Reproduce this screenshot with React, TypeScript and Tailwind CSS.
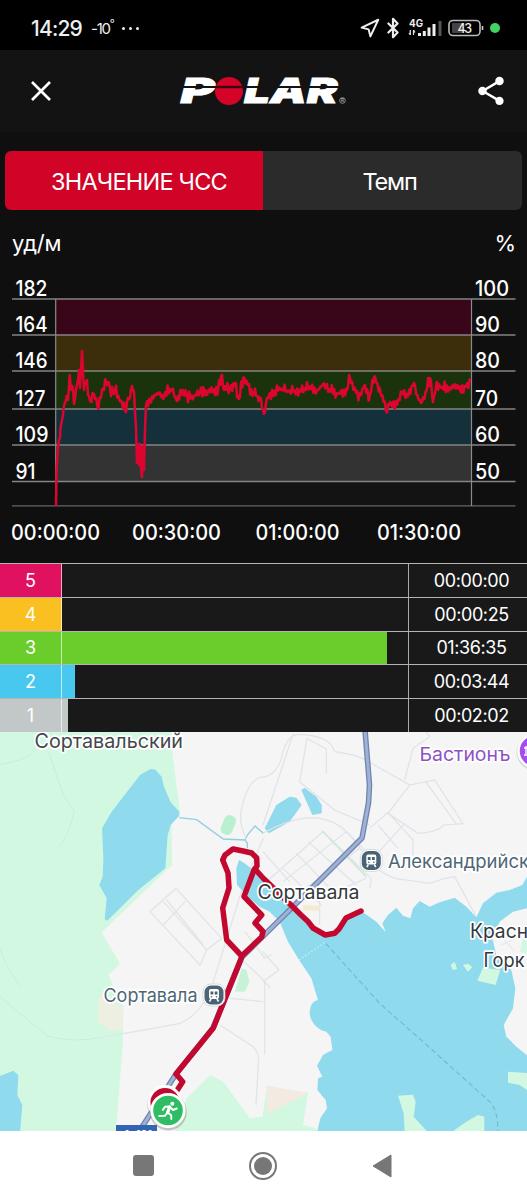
import { Bluetooth, Navigation } from "lucide-react";
import { MdShare } from "react-icons/md";

const gridLines = [
  { y: 299, bpm: 182, bpmWidth: 32, percent: 100, percentWidth: 34 },
  { y: 335, bpm: 164, bpmWidth: 32, percent: 90, percentWidth: 25 },
  { y: 371, bpm: 146, bpmWidth: 32, percent: 80, percentWidth: 25 },
  { y: 409, bpm: 127, bpmWidth: 30, percent: 70, percentWidth: 23 },
  { y: 445, bpm: 109, bpmWidth: 33, percent: 60, percentWidth: 25 },
  { y: 481.5, bpm: 91, bpmWidth: 20, percent: 50, percentWidth: 25 },
];

const bands = [
  { y: 299, height: 36, color: "#380519" },
  { y: 335, height: 36, color: "#3d2e0b" },
  { y: 371, height: 38, color: "#1b330d" },
  { y: 409, height: 36, color: "#14313b" },
  { y: 445, height: 36.5, color: "#333333" },
  { y: 481.5, height: 24, color: "#131313" },
];

const timeTicks = [
  { x: 11, width: 89, label: "00:00:00" },
  { x: 132, width: 89, label: "00:30:00" },
  { x: 255.5, width: 84, label: "01:00:00" },
  { x: 377, width: 84, label: "01:30:00" },
];

const heartRate: [number, number][] = [
  [56, 506], [56.6, 470], [57.7, 450], [59, 440], [60.5, 428], [62, 420],
  [63.5, 409], [65, 403], [66.5, 396], [68, 400], [69.7, 375], [71, 390],
  [73, 388], [74, 404], [76, 390], [78, 380], [79, 370], [80, 388],
  [82, 351], [83, 372], [84, 390], [87, 380], [88, 395], [91.5, 402],
  [94, 394], [98.5, 409], [100, 398], [103, 390], [106, 382], [108, 382],
  [110, 388], [113, 393], [115, 390], [119, 398], [122, 403], [125, 411],
  [127, 402], [130, 397], [132, 386], [134, 392], [135, 412], [136, 428],
  [137, 463], [138, 444], [139, 465], [140, 444], [141, 468], [142, 477],
  [143, 446], [144, 470], [145, 430],
  [146, 405], [150, 399], [155, 395], [160, 393], [163, 399], [168, 388],
  [172, 391], [177, 401], [181, 391], [187, 396], [194, 396], [200, 393],
  [208, 392], [218, 391], [221, 376], [224, 390], [230, 388], [235, 383],
  [239, 399], [243, 378], [248, 385], [254, 394], [261, 399], [264, 414],
  [266, 403], [270, 393], [280, 389], [290, 392], [300, 390], [310, 387],
  [317, 391], [323, 384], [326, 388], [337, 394], [347, 390], [350, 378],
  [355, 389], [359, 397], [364, 386], [369, 400], [374, 377], [379, 387],
  [384, 401], [386, 411], [390, 402], [395, 408], [402, 392], [407, 397],
  [414, 383], [418, 398], [421, 403], [426, 392], [430, 378], [433, 402],
  [437, 382], [440, 387], [450, 389], [455, 386], [460, 389], [465, 387],
  [471, 380],
];

// adds the beat-to-beat jitter between the main samples
const buildTrace = () => {
  const points: string[] = [];
  let n = 0;
  for (let i = 0; i < heartRate.length - 1; i++) {
    const [x1, y1] = heartRate[i];
    const [x2, y2] = heartRate[i + 1];
    points.push(`${x1},${y1}`);
    for (let x = x1 + 1; x < x2 - 0.4; x += 1.2) {
      n++;
      const noise = Math.abs(Math.sin(n * 12.9898) * 43758.5453) % 1;
      const y = y1 + ((y2 - y1) * (x - x1)) / (x2 - x1);
      points.push(`${x},${(y + (n % 2 ? 1 : -1) * (0.5 + noise * noise * 6)).toFixed(1)}`);
    }
  }
  points.push("471,380");
  return points.join(" ");
};

const zones = [
  { id: 5, color: "bg-[#e0115f]", bar: "w-0", time: "00:00:00" },
  { id: 4, color: "bg-[#fabf20]", bar: "w-0", time: "00:00:25" },
  { id: 3, color: "bg-[#6acd2c]", bar: "w-[325px]", time: "01:36:35" },
  { id: 2, color: "bg-[#48c8ef]", bar: "w-[13px]", time: "00:03:44" },
  { id: 1, color: "bg-[#c2c8c8]", bar: "w-[6px]", time: "00:02:02" },
];

const StatusBar = () => (
  <div className="h-[50px] bg-black flex items-center pt-1.5 pl-[31px] pr-[27px] text-[#eee]">
    <span className="text-[21px] font-medium tracking-[-0.8px] leading-none">14:29</span>
    <span className="ml-[9px] text-[15px] leading-none tracking-[-1.3px]">
      -10<sup className="text-[11px] top-[-7px]">°</sup>
    </span>
    <span className="ml-[9px] flex gap-1">
      <i className="size-[3px] rounded-full bg-[#eee]" />
      <i className="size-[3px] rounded-full bg-[#eee]" />
      <i className="size-[3px] rounded-full bg-[#eee]" />
    </span>
    <div className="ml-auto flex items-center">
      <Navigation size={21} strokeWidth={2.3} />
      <Bluetooth className="ml-0.5" size={22} strokeWidth={2.4} />
      <svg className="ml-1" width="36" height="20" viewBox="0 0 36 20">
        <text x="1" y="9" fontSize="10" fontWeight="700" textLength="14" lengthAdjust="spacingAndGlyphs" fill="#eee">
          4G
        </text>
        <path d="M2.3 12v5M1 15l1.3 2M5.5 17v-5M5.5 12l1.5 2.5" stroke="#ddd" strokeWidth="1.3" fill="none" />
        <path d="M11.5 18v-3M16.3 18v-5M21 18V9.500M26 18V6" stroke="#eee" strokeWidth="3" />
        <path d="M32 18V3" stroke="#555" strokeWidth="3" />
      </svg>
      <svg className="ml-1" width="36" height="18" viewBox="0 0 36 18">
        <rect x="1" y="1.500" width="31" height="15" rx="4" fill="none" stroke="#bbb" strokeWidth="1.600" />
        <rect x="4" y="4" width="11" height="10" rx="1" fill="#444" />
        <path d="M34.500 7v4" stroke="#ccc" strokeWidth="1.600" />
        <text x="9.500" y="13.600" fontSize="12.500" fontWeight="500" textLength="14.500" fill="#eee">
          43
        </text>
      </svg>
      <i className="ml-1.5 size-2.5 rounded-full bg-[#41d463]" />
    </div>
  </div>
);

const PolarLogo = () => (
  <svg width="170" height="34" viewBox="0 0 170 34" className="block overflow-visible">
    <g fill="#fff" stroke="#fff" strokeWidth=".8" fontWeight="900" fontStyle="italic" fontSize="34">
      <text x="2.500" y="29.300" textLength="34" lengthAdjust="spacingAndGlyphs">P</text>
      <text x="66" y="29.300" textLength="93.500" lengthAdjust="spacingAndGlyphs">LAR</text>
    </g>
    <path d="M0 13h170" stroke="#131313" strokeWidth="2" />
    <circle cx="51" cy="17" r="14" fill="#d50328" />
    <path d="M37 13h28" stroke="#3a0a12" strokeWidth="2.400" />
    <circle cx="164.500" cy="26.500" r="2.800" fill="none" stroke="#aaa" strokeWidth=".8" />
    <text x="163" y="28.200" fontSize="4.500" fill="#ccc">R</text>
  </svg>
);

const Header = () => (
  <div className="h-[82px] bg-[#131313] flex items-center justify-between pl-[31px] pr-[19px]">
    <svg width="20" height="20" viewBox="0 0 20 20">
      <path d="M1 1l18 18M19 1L1 19" stroke="#fff" strokeWidth="2.700" />
    </svg>
    <PolarLogo />
    <MdShare className="text-white" size={34} />
  </div>
);

const Tabs = () => (
  <div className="mx-[5px] mt-[19px] h-[59px] flex rounded-md overflow-hidden text-white text-[23.5px]">
    <div className="w-[258px] pt-0.5 pl-[10px] bg-[#d10327] flex items-center justify-center">
      <span className="tracking-[-0.8px] whitespace-nowrap">ЗНАЧЕНИЕ ЧСС</span>
    </div>
    <div className="flex-1 pt-0.5 pr-1.5 bg-[#2b2b2b] flex items-center justify-center">
      <span className="tracking-[-1.2px]">Темп</span>
    </div>
  </div>
);

const HeartRateChart = () => (
  <svg className="block" width="527" height="289" viewBox="0 274 527 289">
    {bands.map((band) => (
      <rect key={band.y} x="56" y={band.y} width="415.500" height={band.height} fill={band.color} />
    ))}
    {gridLines.map((line) => (
      <g key={line.y}>
        <path d={`M12 ${line.y}H515.500`} stroke="#858585" strokeWidth="1.300" />
        <g fill="#fff" fontSize="21.500" fontWeight="500">
          <text x="15.500" y={line.y - 3} textLength={line.bpmWidth} lengthAdjust="spacingAndGlyphs">
            {line.bpm}
          </text>
          <text x="475" y={line.y - 3} textLength={line.percentWidth} lengthAdjust="spacingAndGlyphs">
            {line.percent}
          </text>
        </g>
      </g>
    ))}
    <path d="M12 505.800H515.500" stroke="#666" strokeWidth="1.300" />
    <path d="M55.700 299V506M471.500 299V506" stroke="#8a8a8a" strokeWidth="1.200" />
    <polyline points={buildTrace()} fill="none" stroke="#dc0530" strokeWidth="2.500" strokeLinejoin="round" />
    {timeTicks.map((tick) => (
      <text
        key={tick.label}
        x={tick.x}
        y="540"
        textLength={tick.width}
        lengthAdjust="spacingAndGlyphs"
        fill="#fff"
        fontSize="21.500"
        fontWeight="500"
      >
        {tick.label}
      </text>
    ))}
  </svg>
);

const ZoneTable = () => (
  <div className="h-[169px] flex flex-col bg-[#191919] text-white text-[18px]">
    {zones.map((zone) => (
      <div key={zone.id} className="flex-1 flex border-t border-[#b5b5b5]">
        <div className={`w-[62px] border-r border-white/65 flex items-center justify-center ${zone.color}`}>
          {zone.id}
        </div>
        <div className="w-[347px] border-r border-[#aaa]">
          <div className={`h-full ${zone.bar} ${zone.color}`} />
        </div>
        <div className="flex-1 pl-[7px] flex items-center justify-center tracking-[-0.4px]">{zone.time}</div>
      </div>
    ))}
  </div>
);

const Station = ({ x, y }: { x: number; y: number }) => (
  <g transform={`translate(${x} ${y})`}>
    <rect x="-11" y="-11" width="22" height="22" rx="8" fill="#fff" stroke="#c8d0d4" strokeWidth=".7" />
    <rect x="-9.500" y="-9.500" width="19" height="19" rx="6.500" fill="#4b6475" />
    <rect x="-5" y="-6" width="10" height="10" rx="2" fill="#fff" />
    <path d="M-3.500-3.500h2.800v3h-2.800zM.7-3.500h2.800v3H.7z" fill="#4b6475" />
    <path d="M-3 4l-1.500 2.500M3 4l1.500 2.500" stroke="#fff" strokeWidth="1.500" />
    <circle cx="-2.500" cy="1.800" r=".8" fill="#4b6475" />
    <circle cx="2.500" cy="1.800" r=".8" fill="#4b6475" />
  </g>
);

const mapLabels = [
  { x: 34.5, y: 748, width: 148.5, text: "Сортавальский", color: "#43474b", size: 19.5 },
  { x: 257.5, y: 899, width: 102, text: "Сортавала", color: "#33383c", size: 19.5 },
  { x: 388, y: 868, width: 141, text: "Александрийск", color: "#4d6675", size: 18.5 },
  { x: 470, y: 938, width: 58, text: "Красн", color: "#33383c", size: 19.5 },
  { x: 483.5, y: 966.5, width: 41, text: "Горк", color: "#33383c", size: 19.5 },
  { x: 103.5, y: 1002, width: 94, text: "Сортавала", color: "#4d6675", size: 18.5 },
  { x: 419.5, y: 761, width: 91, text: "Бастионъ", color: "#8e52c4", size: 19 },
];

const RouteMap = () => (
  <svg className="block bg-[#f5f5f5]" width="527" height="399" viewBox="0 732 527 399">
    {/* north-west */}
    <g transform="translate(0 725) scale(.33333)" fill="none" stroke="#e3e4e8" strokeWidth="4">
      <path
        d="M0 0H512L518 90L540 260L515 290L516 420L500 435L305 622L360 716L325 750L340 785L370 845L368 960L348 1220H0Z"
        fill="#d3f8e2"
        stroke="none"
      />
      <path d="M295 825L310 800L370 850L368 910L335 918L295 890Z" fill="#eeefe0" stroke="none" />
      <path
        d="M450 133L465 133L485 155L492 185L512 232L538 260L538 272L512 300L503 330L496 430L415 495L322 587L314 583L320 520L298 480L308 455L310 400L306 310L335 260L420 150Z"
        fill="#90daee"
        stroke="none"
      />
      <path d="M0 1053L40 1037L55 1050L52 1110L67 1140L60 1225H0Z" fill="#90daee" stroke="none" />
      <path d="M538 278L590 284L670 342L735 345L742 330L765 303L790 325M735 345L742 355V370" stroke="#8fcfe0" />
      <rect x="667" y="270" width="36" height="60" rx="16" transform="rotate(22 685 300)" fill="#baf0cf" stroke="none" />
      <g stroke="#cfe9d8" strokeWidth="3">
        <path d="M0 118Q60 110 100 85M145 80L190 210L223 258Q205 340 175 365" />
        <path d="M0 670Q10 710 60 785M0 815L140 932Q215 955 300 938" />
      </g>
      <path d="M300 938L450 912L540 895Q610 865 640 770L690 610L730 480L790 340" />
      <path d="M528 490L450 560L600 720L620 675L665 640L560 525Z M490 530L620 675M490 600L555 530M500 525L610 660" />
      <path d="M790 155Q745 160 725 250Q715 290 738 340" />
      <path d="M720 700Q790 760 810 790M690 820L790 830M660 900L760 965Q775 985 776 1000L768 1140M735 620L795 700" />
      <path d="M725 730L740 735L748 770L735 800L705 800Z" fill="#c8f2d8" stroke="none" />
      <path d="M560 1120L630 1050L670 1070L750 1180L820 1170V1230H520Z" fill="#d3f8e2" stroke="none" />
    </g>

    {/* east side, bay and islands */}
    <g transform="translate(263 725) scale(.33333)" fill="none" stroke="#dfe2e8" strokeWidth="3.500">
      <path d="M12 1082L135 1104L120 1200L160 1210V1225H0V1165Z" fill="#d3f8e2" stroke="none" />
      <path d="M12 1082L135 1104L12 1168Z" fill="#f3eae2" stroke="none" />
      <path d="M15 290L40 240L80 215L100 218L116 240L80 290L18 325L5 310Z" fill="#90daee" stroke="none" />
      <path d="M115 195L125 188L160 215L176 240V265L148 270Z" fill="#90daee" stroke="none" />
      <path
        d="M-80 430L-72 405L-55 415L-10 450L30 495L80 525L110 560L150 610L190 630L230 610L255 580L300 562L340 590L368 622L358 595L375 570L400 548L420 572L442 580L450 550L470 528L500 545L530 532L575 518L610 545L640 577L660 535L700 503L740 495L778 480L800 440V1230H160L172 1180L192 1150L188 1125L163 1095L165 1060L178 1055L162 1022L180 990L208 975L203 935L190 920L175 916Q140 895 140 860Q142 830 165 825L145 760L105 700L75 650L50 590L20 560L-10 545L-40 520L-78 480Z"
        fill="#90daee"
        stroke="none"
      />
      <path
        d="M800 548L750 560L710 590L688 640L700 690L745 735L757 790L750 850L722 900L730 935L760 965L800 997Z"
        fill="#f5f5f5"
        stroke="none"
      />
      <g fill="#d3f8e2" stroke="none">
        <path d="M405 1112L450 1109L458 1130L452 1175L495 1222H425L422 1165Z" />
        <path d="M565 1222L610 1190L645 1170L664 1175V1222Z" />
        <path d="M735 1040L800 1045V1100L770 1080L735 1073Z" />
        <path d="M660 728L712 735L698 780L643 767Z" />
        <path d="M563 720L575 710L582 732L570 735ZM600 720L615 716L628 726L615 740Z" />
        <path d="M780 640L800 655V690L770 680Z" />
      </g>
      <path d="M188 655L350 835L480 950L680 1130Q705 1155 705 1222" stroke="#6bbdd0" strokeDasharray="16 9" />
      <path d="M108 705L190 650" stroke="#c6edf5" strokeDasharray="5 6" />
      <path d="M0 325Q170 230 260 330L330 420Q380 465 430 465L500 475Q560 455 575 455L640 575" />
      <path d="M0 157Q40 150 55 100Q70 30 105 28Q200 30 215 80Q290 90 320 112L440 180L375 265L465 325Q530 320 540 300L600 296L515 165L440 180" />
      <path d="M488 170L580 297M425 165L450 70L500 35L490 20M90 28L0 300M190 145V72L132 40L110 170L215 255L320 300" />
      <path d="M0 480L180 320L325 460L320 490M100 385L230 520M135 350L280 480M60 430L175 540M60 470L250 320L330 400M100 510L290 370M170 600V520L310 460M320 310L375 262L450 345L450 400M345 300L405 370M425 295L330 400M0 380L80 470" />
      <path d="M178 318L310 455" stroke="#cfe8d8" strokeWidth="5" />
      <path d="M120 548L170 550" stroke="#f3ead0" strokeWidth="14" />
      <path d="M0 680L48 735L0 770M0 700L25 690M5 770V990" />
      <path d="M715 660L760 640L790 620M720 640L755 680" stroke="#e8e8ea" />
    </g>

    {/* highway */}
    <g fill="none" strokeLinejoin="round">
      <path d="M365 730L369.500 785L368.500 803L362 838L313 887L242 957L213 1028L176 1074L142 1127" stroke="#7085b0" strokeWidth="5.600" />
      <path d="M365 730L369.500 785L368.500 803L362 838L313 887L242 957L213 1028L176 1074L142 1127" stroke="#9fb2d6" strokeWidth="3" />
    </g>

    {/* workout route */}
    <g fill="none" stroke="#c2082e" strokeWidth="5.500" strokeLinejoin="round" strokeLinecap="round">
      <path d="M361 911L346 918L339 929L334.700 933.300L325.300 935L313 928L308 921.500L301 915L291 905L263 878L255 869" />
      <path d="M254 870L257 866L256.700 858L251.700 853L243 851L233 849L225 855L222.700 860L228 873L229 888L222.700 908L226.700 940L241.700 956L261.700 937L263 931.500L255 923L261.700 915L244 896.500Z" />
      <path d="M241.700 957L213.300 1028L176 1074L182.700 1081.700L176 1092" />
    </g>

    <rect x="116" y="1125" width="41" height="8" fill="#3464b4" />
    <text x="123" y="1138" fontSize="11" fontWeight="700" fill="#fff" textLength="29">
      A-121
    </text>

    <circle cx="165" cy="1104" r="18" fill="#999" opacity=".35" />
    <circle cx="165" cy="1102.500" r="16" fill="#c2082e" stroke="#fff" strokeWidth="2.800" />
    <circle cx="168.300" cy="1112" r="18.500" fill="#777" opacity=".4" />
    <circle cx="168" cy="1110.500" r="16.200" fill="#2fbd64" stroke="#fff" strokeWidth="2.800" />
    {/* runner */}
    <circle cx="172.300" cy="1103.800" r="2" fill="#fff" />
    <g fill="none" stroke="#fff" strokeWidth="1.900" strokeLinecap="round" strokeLinejoin="round">
      <path d="M169.600 1107L167.600 1112.500" strokeWidth="3.200" />
      <path d="M169.800 1106.800L173 1110L176.800 1108.500M169.500 1106.500L165.200 1106.700L162.800 1109.800" />
      <path d="M168 1112.800L171.200 1115.200L171.300 1119M167.300 1112.800L164.800 1115.800L159.200 1116" />
    </g>

    <Station x={371.3} y={860.5} />
    <Station x={214} y={995} />

    <circle cx="535" cy="752" r="18.500" fill="#999" opacity=".35" />
    <circle cx="535" cy="751" r="16.500" fill="#a44df0" stroke="#fff" strokeWidth="2.500" />
    <path d="M524 748h6M526 746v8M524 755h6" stroke="#fff" strokeWidth="1.400" />

    {mapLabels.map((label) => (
      <text
        key={label.text + label.y}
        x={label.x}
        y={label.y}
        textLength={label.width}
        lengthAdjust="spacingAndGlyphs"
        fontSize={label.size}
        fill={label.color}
        stroke="#fff"
        strokeWidth="3.500"
        strokeLinejoin="round"
        paintOrder="stroke"
      >
        {label.text}
      </text>
    ))}
  </svg>
);

const NavBar = () => (
  <div className="h-[69px] bg-white flex items-center justify-between pl-[133px] pr-[135px]">
    <div className="size-[21px] rounded-[3px] bg-[#777]" />
    <div className="size-7 rounded-full border-2 border-[#777] flex items-center justify-center">
      <div className="size-[18px] rounded-full bg-[#777]" />
    </div>
    <svg width="20" height="24" viewBox="0 0 20 24">
      <path d="M19 1v22L1 12z" fill="#777" stroke="#777" strokeLinejoin="round" />
    </svg>
  </div>
);

const App = () => {
  return (
    <div className="w-[527px] h-[1200px] overflow-hidden bg-[#0f0f0f] font-['Inter','Noto_Sans',sans-serif]">
      <StatusBar />
      <Header />
      <Tabs />
      <div className="h-[64px] pt-0.5 pl-3 pr-[11px] flex items-center justify-between text-white text-[22px]">
        <span className="tracking-[-0.2px]">уд/м</span>
        <span>%</span>
      </div>
      <HeartRateChart />
      <ZoneTable />
      <RouteMap />
      <NavBar />
    </div>
  );
};

export default App;
